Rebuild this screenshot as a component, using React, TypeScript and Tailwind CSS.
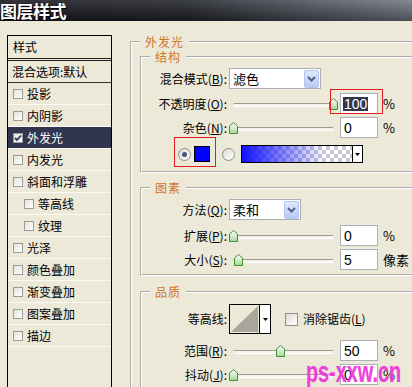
import React from "react";

const cjk = "font-['Noto_Sans_CJK_SC','Noto_Sans_CJK_JP',sans-serif]";

const styles = [
  { label: "投影" },
  { label: "内阴影" },
  { label: "外发光", checked: true },
  { label: "内发光" },
  { label: "斜面和浮雕" },
  { label: "等高线", indent: true },
  { label: "纹理", indent: true },
  { label: "光泽" },
  { label: "颜色叠加" },
  { label: "渐变叠加" },
  { label: "图案叠加" },
  { label: "描边" },
];

function Check({ checked }: { checked?: boolean }) {
  return (
    <span className="flex h-[10px] w-[10px] shrink-0 items-center justify-center border border-[#9c9b94] bg-gradient-to-br from-[#e4e3dc] to-white">
      {checked && (
        <svg width="8" height="8" viewBox="0 0 8 8">
          <path d="M1 4 L3 6 L7 1.5" fill="none" stroke="#21316b" strokeWidth="1.8" />
        </svg>
      )}
    </span>
  );
}

function Radio({ on }: { on?: boolean }) {
  return (
    <span className="flex h-[13px] w-[13px] shrink-0 items-center justify-center rounded-full border border-[#8f8f8a] bg-gradient-to-br from-[#dcdbd3] to-white">
      {on && <span className="h-[5px] w-[5px] rounded-full bg-[#4a5678]" />}
    </span>
  );
}

function Thumb() {
  return (
    <svg width="9" height="12" viewBox="0 0 9 12">
      <defs>
        <linearGradient id="thumbFill" x1="0" y1="0" x2="0" y2="1">
          <stop offset="0%" stopColor="#ffffff" />
          <stop offset="100%" stopColor="#a6d894" />
        </linearGradient>
      </defs>
      <path d="M0.5 11.5 V4 L4.5 0.5 L8.5 4 V11.5 Z" fill="url(#thumbFill)" stroke="#3f8f3a" />
    </svg>
  );
}

function Slider({ pos }: { pos: number }) {
  return (
    <div className="relative h-[21px] w-[104px] shrink-0">
      <div className="absolute left-[4px] right-0 top-[10px] h-[3px] rounded-l-full border-t border-[#9d9b90] bg-[#f4f3ee] shadow-[0_1px_0_#ffffff]" />
      <div className="absolute top-[5px]" style={{ left: pos }}>
        <Thumb />
      </div>
    </div>
  );
}

function NumBox({ value, selected }: { value: string; selected?: boolean }) {
  return (
    <div className="flex h-[21px] w-[38px] shrink-0 items-center border border-[#a9b0b8] bg-white pl-[2px] font-['Liberation_Sans',sans-serif] text-[14px] leading-[14px] text-black">
      {selected ? <span className="bg-[#31364b] px-[1px] text-white">{value}</span> : <span className="px-[1px]">{value}</span>}
    </div>
  );
}

function DropButton() {
  return (
    <span className="flex h-[18px] w-[15px] items-center justify-center rounded-[2px] border border-[#b3c6ef] bg-gradient-to-b from-[#dfe8fd] to-[#b8cbf5]">
      <svg width="9" height="6" viewBox="0 0 9 6">
        <path d="M1 1 L4.5 4.5 L8 1" fill="none" stroke="#4d6185" strokeWidth="2" />
      </svg>
    </span>
  );
}

function Select({ value, width }: { value: string; width: number }) {
  return (
    <div className="flex h-[21px] shrink-0 items-center justify-between border border-[#a9b0b8] bg-white pl-[3px] pr-[1px]" style={{ width }}>
      <span className="text-[13px] leading-[14px] text-black">{value}</span>
      <DropButton />
    </div>
  );
}

function Label({ text, keyChar }: { text: string; keyChar?: string }) {
  return (
    <span className="w-[85px] shrink-0 text-right text-[12px] leading-[14px] text-black">
      {text}
      {keyChar && (
        <>
          (<span className="underline">{keyChar}</span>)
        </>
      )}
      :
    </span>
  );
}

function SliderRow({ text, keyChar, pos, value, unit, selected }: { text: string; keyChar: string; pos: number; value: string; unit: string; selected?: boolean }) {
  return (
    <div className="relative flex h-[21px] items-center gap-[2px]">
      <Label text={text} keyChar={keyChar} />
      <Slider pos={pos} />
      <div className="ml-[5px]">
        <NumBox value={value} selected={selected} />
      </div>
      <span className="ml-[3px] text-[13px] leading-[14px] text-black">{unit}</span>
      {selected && <div className="absolute left-[188px] top-[-4px] h-[25px] w-[53px] border border-[#e01e1e]" />}
    </div>
  );
}

function Group({ title, className, children }: { title: string; className?: string; children: React.ReactNode }) {
  return (
    <fieldset className={`border-2 border-white [border-style:groove] ${className ?? ""}`}>
      <legend className="ml-[8px] px-[5px] text-[12px] leading-[14px] tracking-[1px] text-[#d0742c]">{title}</legend>
      {children}
    </fieldset>
  );
}

export default function App() {
  return (
    <div className={`relative h-[387px] w-[412px] overflow-hidden bg-[#ece9d8] ${cjk}`}>
      <div className="h-[21px] whitespace-nowrap bg-[linear-gradient(to_bottom,rgba(255,255,255,0.12),rgba(0,0,0,0.35)),linear-gradient(to_right,#16171d_0%,#22242c_45%,#767985_100%)] text-[17px] font-bold leading-[21px] tracking-[-0.5px] text-white [text-shadow:1px_1px_0_#000]">
        图层样式
      </div>

      <div className="flex pl-[7px] pt-[14px]">
        <div className="h-[360px] w-[105px] shrink-0 border border-black bg-[#ece9d8]">
          <div className="flex h-[25px] items-center border-b-[3px] border-double border-[#222] pl-[5px] text-[12px] text-black">样式</div>
          <div className="flex h-[22px] items-center border-b border-[#333] pl-[4px] text-[12px] text-black">混合选项:默认</div>
          {styles.map((s) => (
            <div
              key={s.label}
              className={`flex h-[22px] items-center gap-[4px] border-b border-[#fbfaf4] text-[12px] ${s.indent ? "pl-[16px]" : "pl-[5px]"} ${s.checked ? "bg-[#313550] text-white" : "text-black"}`}
            >
              <Check checked={s.checked} />
              <span className="leading-[14px]">{s.label}</span>
            </div>
          ))}
        </div>

        <div className="ml-[18px] w-[320px] shrink-0">
          <Group title="外发光">
            <Group title="结构" className="ml-[8px] mt-[1px] pb-[3px] pt-[4px]">
              <div className="flex h-[21px] items-center gap-[2px]">
                <Label text="混合模式" keyChar="B" />
                <Select value="滤色" width={92} />
              </div>
              <div className="mt-[4px]">
                <SliderRow text="不透明度" keyChar="O" pos={100} value="100" unit="%" selected />
              </div>
              <div className="mt-[3px]">
                <SliderRow text="杂色" keyChar="N" pos={0} value="0" unit="%" />
              </div>
              <div className="relative mt-[2px] flex h-[28px] items-center pl-[36px]">
                <Radio on />
                <span className="ml-[3px] h-[16px] w-[16px] border border-black bg-[#0000ff]" />
                <span className="ml-[12px]">
                  <Radio />
                </span>
                <div className="ml-[6px] flex h-[18px] w-[122px] border border-black">
                  <div className="h-full flex-1 bg-[linear-gradient(to_right,#1010ff,rgba(40,40,255,0)_75%),repeating-conic-gradient(#c9c9d6_0%_25%,#ffffff_0%_50%)] bg-[length:100%_100%,8px_8px]" />
                  <div className="flex w-[10px] items-center justify-center border-l border-black bg-white">
                    <svg width="5" height="3" viewBox="0 0 5 3">
                      <path d="M0 0 H5 L2.5 3 Z" fill="#000" />
                    </svg>
                  </div>
                </div>
                <div className="absolute left-[32px] top-[-3px] h-[30px] w-[42px] border border-[#e01e1e]" />
              </div>
            </Group>

            <Group title="图素" className="ml-[8px] mt-[8px] pb-[4px] pt-[4px]">
              <div className="flex h-[21px] items-center gap-[2px]">
                <Label text="方法" keyChar="Q" />
                <Select value="柔和" width={72} />
              </div>
              <div className="mt-[5px]">
                <SliderRow text="扩展" keyChar="P" pos={0} value="0" unit="%" />
              </div>
              <div className="mt-[3px]">
                <SliderRow text="大小" keyChar="S" pos={5} value="5" unit="像素" />
              </div>
            </Group>

            <Group title="品质" className="ml-[8px] mt-[9px] pb-[10px] pt-[5px]">
              <div className="flex h-[30px] items-center gap-[2px]">
                <Label text="等高线" />
                <div className="flex h-[30px] w-[42px] shrink-0 border border-black bg-[#ece9d8]">
                  <svg width="29" height="28" viewBox="0 0 29 28" className="shrink-0">
                    <path d="M1 27 L28 1 V27 Z" fill="#a9a59a" />
                  </svg>
                  <div className="flex flex-1 items-center justify-center border-l border-black bg-white">
                    <svg width="5" height="3" viewBox="0 0 5 3">
                      <path d="M0 0 H5 L2.5 3 Z" fill="#000" />
                    </svg>
                  </div>
                </div>
                <div className="ml-[12px] flex items-center gap-[5px] text-[12px] leading-[14px] text-black">
                  <span className="h-[13px] w-[13px] border border-[#8f8e88] bg-gradient-to-br from-[#dcdbd3] to-white" />
                  <span>
                    消除锯齿(<span className="underline">L</span>)
                  </span>
                </div>
              </div>
              <div className="mt-[6px]">
                <SliderRow text="范围" keyChar="R" pos={47} value="50" unit="%" />
              </div>
              <div className="mt-[3px]">
                <SliderRow text="抖动" keyChar="J" pos={0} value="0" unit="%" />
              </div>
            </Group>
          </Group>
        </div>
      </div>

      <div className="absolute left-[306px] top-[357px] origin-left scale-x-[0.66] whitespace-nowrap font-['Liberation_Sans',sans-serif] text-[30px] font-bold leading-[30px] text-[#ec2fd8] opacity-90 [text-shadow:0_0_1px_#ffb0f0]">
        ps-xxw.cn
      </div>
    </div>
  );
}
